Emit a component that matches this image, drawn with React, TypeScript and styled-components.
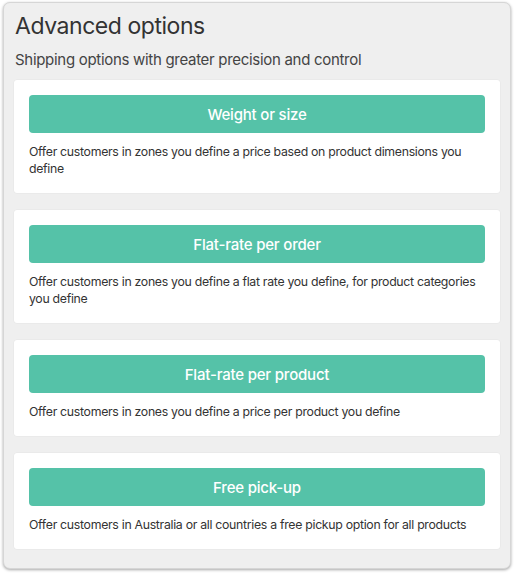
import React from "react";
import styled, { createGlobalStyle } from "styled-components";

const Global = createGlobalStyle`
  html, body { margin: 0; padding: 0; background: #ffffff; }
  body { font-family: Inter, "Open Sans", "Liberation Sans", sans-serif; -webkit-font-smoothing: antialiased; }
`;

const Page = styled.div`
  padding: 2px 3px 5px 3px;
`;

const Panel = styled.section`
  width: 508px;
  box-sizing: border-box;
  height: 567px;
  background: #efefef;
  border: 1px solid #d6d6d6;
  border-radius: 7px;
  box-shadow: 0 1px 3px rgba(0, 0, 0, 0.35);
  padding: 8px 10px 0 10px;
`;

const Title = styled.h2`
  margin: 0 0 0 1px;
  font-size: 23px;
  line-height: 30px;
  font-weight: 400;
  color: #333;
  letter-spacing: -0.45px;
`;

const Subtitle = styled.p`
  margin: 9px 0 0 1px;
  font-size: 15px;
  line-height: 20px;
  color: #444;
  letter-spacing: -0.3px;
`;

const List = styled.div`
  margin-top: 10px;
  display: flex;
  flex-direction: column;
  gap: 17px;
`;

const Card = styled.div`
  background: #fff;
  border-radius: 3px;
  padding: 15px 15px 16px 15px;
  box-shadow: 0 0 0 0.5px rgba(0, 0, 0, 0.04);
`;

const Button = styled.button`
  display: block;
  width: 100%;
  height: 38px;
  border: none;
  border-radius: 4px;
  background: #55c2a8;
  color: #fff;
  font-family: inherit;
  font-size: 15px;
  font-weight: 500;
  letter-spacing: -0.2px;
  cursor: pointer;
`;

const Desc = styled.p`
  margin: 10px 0 0 0;
  font-size: 12.3px;
  line-height: 17px;
  color: #333;
  letter-spacing: -0.3px;
`;

const options = [
  {
    title: "Weight or size",
    desc: "Offer customers in zones you define a price based on product dimensions you define",
  },
  {
    title: "Flat-rate per order",
    desc: "Offer customers in zones you define a flat rate you define, for product categories you define",
  },
  {
    title: "Flat-rate per product",
    desc: "Offer customers in zones you define a price per product you define",
  },
  {
    title: "Free pick-up",
    desc: "Offer customers in Australia or all countries a free pickup option for all products",
  },
];

export default function App() {
  return (
    <Page>
      <Global />
      <Panel>
        <Title>Advanced options</Title>
        <Subtitle>Shipping options with greater precision and control</Subtitle>
        <List>
          {options.map((o) => (
            <Card key={o.title}>
              <Button>{o.title}</Button>
              <Desc>{o.desc}</Desc>
            </Card>
          ))}
        </List>
      </Panel>
    </Page>
  );
}
